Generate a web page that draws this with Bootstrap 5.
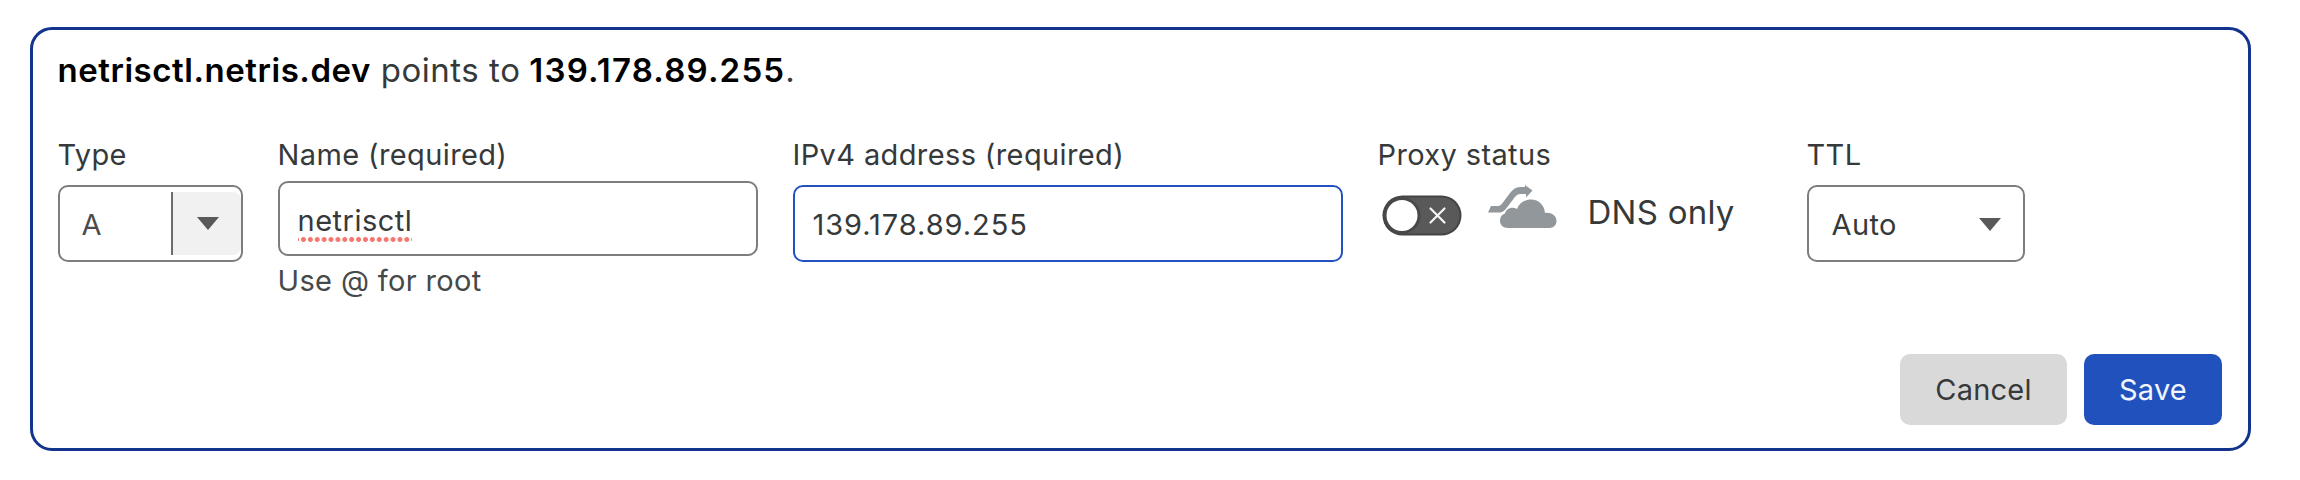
<!DOCTYPE html>
<html lang="en">
<head>
<meta charset="utf-8">
<meta name="viewport" content="width=device-width, initial-scale=1">
<title>DNS record</title>
<link href="https://cdn.jsdelivr.net/npm/bootstrap@5.3.0/dist/css/bootstrap.min.css" rel="stylesheet">
<style>
body { font-family: Inter, "Liberation Sans", sans-serif; font-size: 29px; line-height: 36px; letter-spacing: .38px; color: #36393a; background: #fff; }
.record-card { margin: 27px 49px 0 30px; height: 424px; border: 3px solid #12348c; border-radius: 22px; padding: 20px 26px 23px 24.500px; }
.record-title { font-size: 33px; line-height: 40px; letter-spacing: .54px; margin-bottom: 47px; }
.record-title strong { color: #000; font-weight: 600; }
.record-title .ip-value { letter-spacing: 1.2px; margin-left: -1px; }
.record-fields { column-gap: 35px; }
.form-label { display: block; margin: 0 0 12px; line-height: 36px; font-size: 29px; }
.form-label.name-label { margin-bottom: 8px; }
.field-box { display: flex; height: 77px; border: 2px solid #7d7d7d; border-radius: 10px; font-size: 29px; line-height: 36px; color: #36393a; padding: 2px 18px 0; align-items: center; background: #fff; letter-spacing: inherit; text-align: left; }
.field-box.name-box { height: 75px; }
.field-box.ip-box { border-color: #2251c0; color: #36393a; letter-spacing: .95px; }
.field-box.ttl-box { padding: 2px 22px 0 23px; }
.type-value { margin-left: 22px; margin-top: 2px; color: #4c4c4c; }
.type-toggle { width: 70px; height: 63px; border-left: 2px solid #6c6c6c; background: #f1f1f1; border-radius: 0 8px 8px 0; padding-left: 24px; }
.misspelled { letter-spacing: .5px; padding-bottom: 4px; margin-top: 6px; background: radial-gradient(circle, #f4776d 2.1px, transparent 2.8px) 2px 100% / 6.9px 7px repeat-x; }
.help { margin-top: 7px; color: #46494a; letter-spacing: .36px; }
.w-type { width: 185px; } .w-name { width: 480px; } .w-ip { width: 550px; } .w-proxy { width: 394px; } .w-ttl { width: 218px; }
.proxy-switch { width: 80px; height: 41px; margin-left: 4px; margin-top: 10px; }
.cloud-icon { margin-left: 26px; }
.proxy-text { font-size: 33px; line-height: 40px; letter-spacing: .25px; margin-left: 31px; margin-top: 7px; }
.record-actions { gap: 17px; }
.record-actions .btn { height: 71px; border: 0; border-radius: 10px; padding: 1px 0 0; font-size: 29px; letter-spacing: .2px; line-height: 36px; }
.btn-cancel, .btn-cancel:hover { width: 167px; background: #d9d9d9; color: #36393a; }
.btn-save, .btn-save:hover { width: 138px; background: #2151bd; color: #f2f5fb; }
</style>
</head>
<body>
<main class="record-card d-flex flex-column">
  <p class="record-title"><strong>netrisctl.netris.dev</strong> points to <strong class="ip-value">139.178.89.255</strong>.</p>
  <div class="record-fields d-flex align-items-start">
    <div class="w-type">
      <label class="form-label">Type</label>
      <button type="button" class="field-box w-100 p-0 justify-content-between">
        <span class="type-value">A</span>
        <span class="type-toggle d-flex align-items-center"><svg width="22" height="13" viewBox="0 0 22 13"><path d="M0 0h22L11 13z" fill="#595959"/></svg></span>
      </button>
    </div>
    <div class="w-name">
      <label class="form-label name-label">Name (required)</label>
      <div class="field-box name-box"><span class="misspelled">netrisctl</span></div>
      <div class="help">Use @ for root</div>
    </div>
    <div class="w-ip">
      <label class="form-label" for="ip">IPv4 address (required)</label>
      <input id="ip" class="form-control field-box ip-box" value="139.178.89.255">
    </div>
    <div class="w-proxy">
      <label class="form-label">Proxy status</label>
      <div class="d-flex align-items-start">
        <svg class="proxy-switch" viewBox="0 0 80 41">
          <rect x=".5" y=".5" width="79" height="40" rx="20" fill="#444"/>
          <rect x="2.5" y="2.5" width="75" height="36" rx="18" fill="#595959"/>
          <circle cx="20.5" cy="20.5" r="18" fill="#484848"/>
          <circle cx="20" cy="20.5" r="15.5" fill="#fff"/>
          <path d="M48.5 13.5l14 14m0-14l-14 14" stroke="#f4f4f4" stroke-width="2.2" stroke-linecap="round"/>
        </svg>
        <svg class="cloud-icon" width="69" height="44" viewBox="0 0 69 44" fill="#92979b">
          <path d="M0 27.5L3 21h7c2 0 3-1 4.500-3L22 8c3-4 6-6 10-6h5V0l7.500 5.500L38 12.500V9h-5c-3 0-4.500 1-6.500 3.500L19 22.500c-3 4-5 5-8 5z"/>
          <path d="M20 43c-5 0-8-3-8-7.500 0-3.500 2-6 5-7 1-5 7-7.500 12-4.500C31 18 37 14.500 43 14.500c8 0 13.500 6 14 13.500 6-1.500 11.500 2.500 11.500 8 0 4-3 7-7 7z"/>
        </svg>
        <span class="proxy-text">DNS only</span>
      </div>
    </div>
    <div class="w-ttl">
      <label class="form-label">TTL</label>
      <button type="button" class="field-box ttl-box w-100 justify-content-between">
        <span>Auto</span>
        <svg width="22" height="13" viewBox="0 0 22 13"><path d="M0 0h22L11 13z" fill="#595959"/></svg>
      </button>
    </div>
  </div>
  <div class="record-actions d-flex justify-content-end mt-auto">
    <button type="button" class="btn btn-cancel">Cancel</button>
    <button type="button" class="btn btn-save">Save</button>
  </div>
</main>
<script src="https://cdn.jsdelivr.net/npm/bootstrap@5.3.0/dist/js/bootstrap.bundle.min.js"></script>
</body>
</html>
